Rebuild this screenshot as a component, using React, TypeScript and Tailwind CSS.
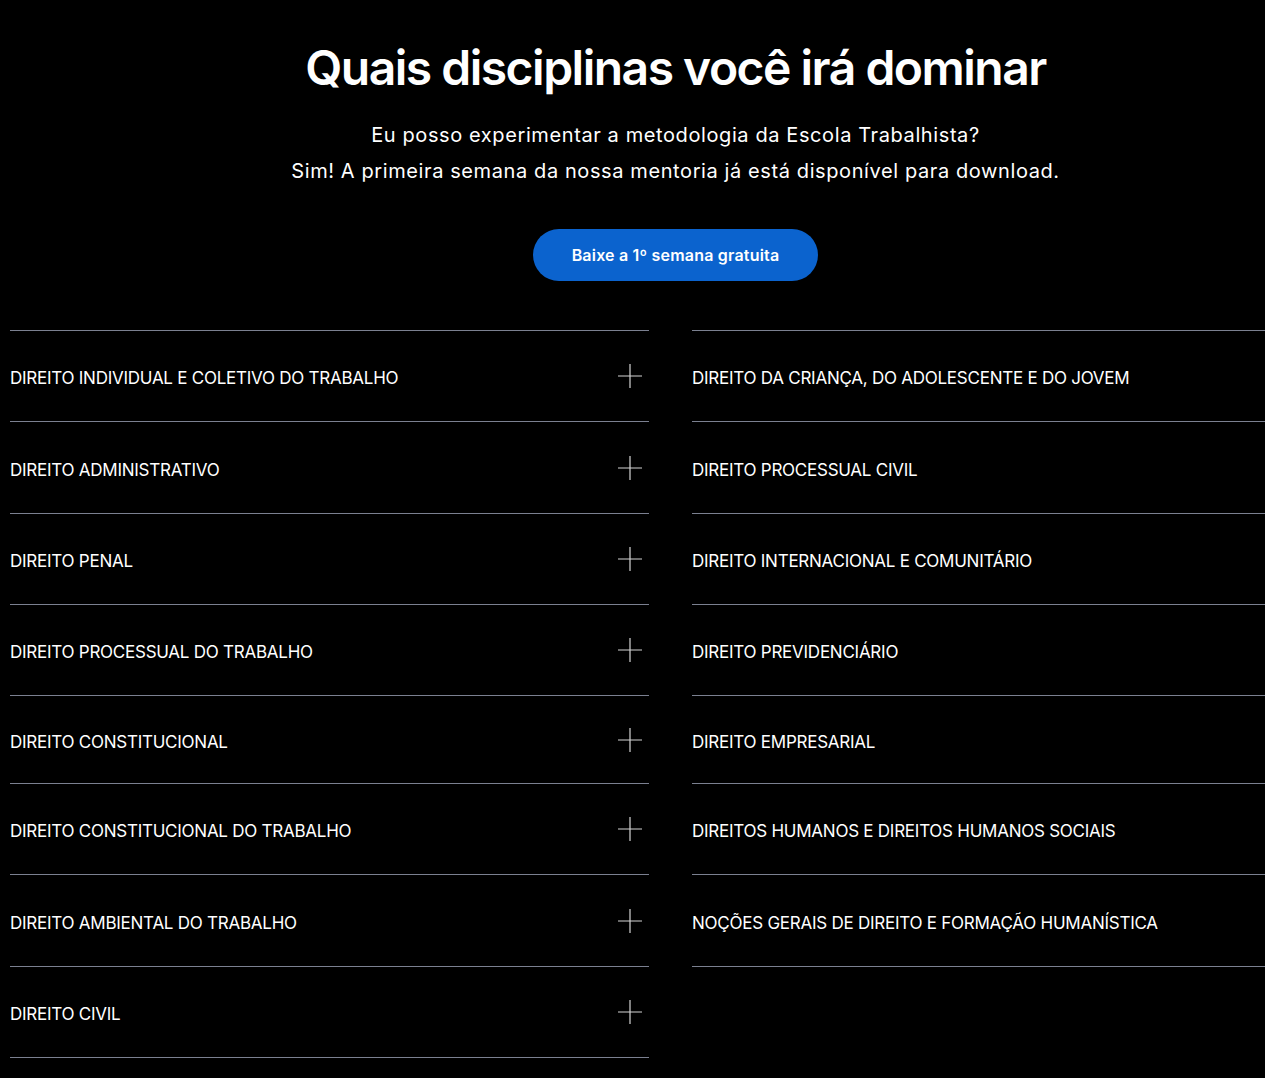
const left = [
  "DIREITO INDIVIDUAL E COLETIVO DO TRABALHO",
  "DIREITO ADMINISTRATIVO",
  "DIREITO PENAL",
  "DIREITO PROCESSUAL DO TRABALHO",
  "DIREITO CONSTITUCIONAL",
  "DIREITO CONSTITUCIONAL DO TRABALHO",
  "DIREITO AMBIENTAL DO TRABALHO",
  "DIREITO CIVIL",
];

const right = [
  "DIREITO DA CRIANÇA, DO ADOLESCENTE E DO JOVEM",
  "DIREITO PROCESSUAL CIVIL",
  "DIREITO INTERNACIONAL E COMUNITÁRIO",
  "DIREITO PREVIDENCIÁRIO",
  "DIREITO EMPRESARIAL",
  "DIREITOS HUMANOS E DIREITOS HUMANOS SOCIAIS",
  "NOÇÕES GERAIS DE DIREITO E FORMAÇÃO HUMANÍSTICA",
];

// row heights measured between the divider lines
const heights = ["h-[91px]", "h-[92px]", "h-[91px]", "h-[91px]", "h-[88px]", "h-[91px]", "h-[92px]", "h-[91px]"];

function Plus() {
  return (
    <svg viewBox="0 0 24 24" className="h-6 w-6 shrink-0" fill="none" stroke="#d4d4d4" strokeWidth={1.2}>
      <path d="M12 0v24M0 12h24" />
    </svg>
  );
}

function Item({ label, h, icon }: { label: string; h: string; icon: boolean }) {
  return (
    <div className={`flex ${h} items-center justify-between border-t border-[#7b8090] pr-[7px]`}>
      <span className="mt-[6px] text-[17px] tracking-[-0.25px] text-white">{label}</span>
      {icon && <Plus />}
    </div>
  );
}

export default function App() {
  return (
    <div className="min-h-screen overflow-hidden bg-black font-['Inter',sans-serif]">
      <div className="w-[1351px]">
        <section className="flex flex-col items-center pt-[38px] text-white">
          <h1 className="text-[48px] font-semibold leading-[60px] tracking-[-1.5px]">
            Quais disciplinas você irá dominar
          </h1>
          <p className="mt-[19px] text-center text-[20px] leading-[36px] tracking-[0.6px]">
            Eu posso experimentar a metodologia da Escola Trabalhista?
            <br />
            Sim! A primeira semana da nossa mentoria já está disponível para download.
          </p>
          <button className="mt-[40px] h-[52px] w-[285px] rounded-full bg-[#0b63ce] text-[16px] font-semibold tracking-[0.2px] text-white">
            Baixe a 1º semana gratuita
          </button>
        </section>

        <div className="mt-[49px] grid grid-cols-[639px_639px] gap-x-[43px] pl-[10px]">
          <div className="border-b border-[#7b8090]">
            {left.map((l, i) => (
              <Item key={l} label={l} h={heights[i]} icon />
            ))}
          </div>
          <div className="self-start border-b border-[#7b8090]">
            {right.map((l, i) => (
              <Item key={l} label={l} h={heights[i]} icon={false} />
            ))}
          </div>
        </div>
      </div>
    </div>
  );
}
